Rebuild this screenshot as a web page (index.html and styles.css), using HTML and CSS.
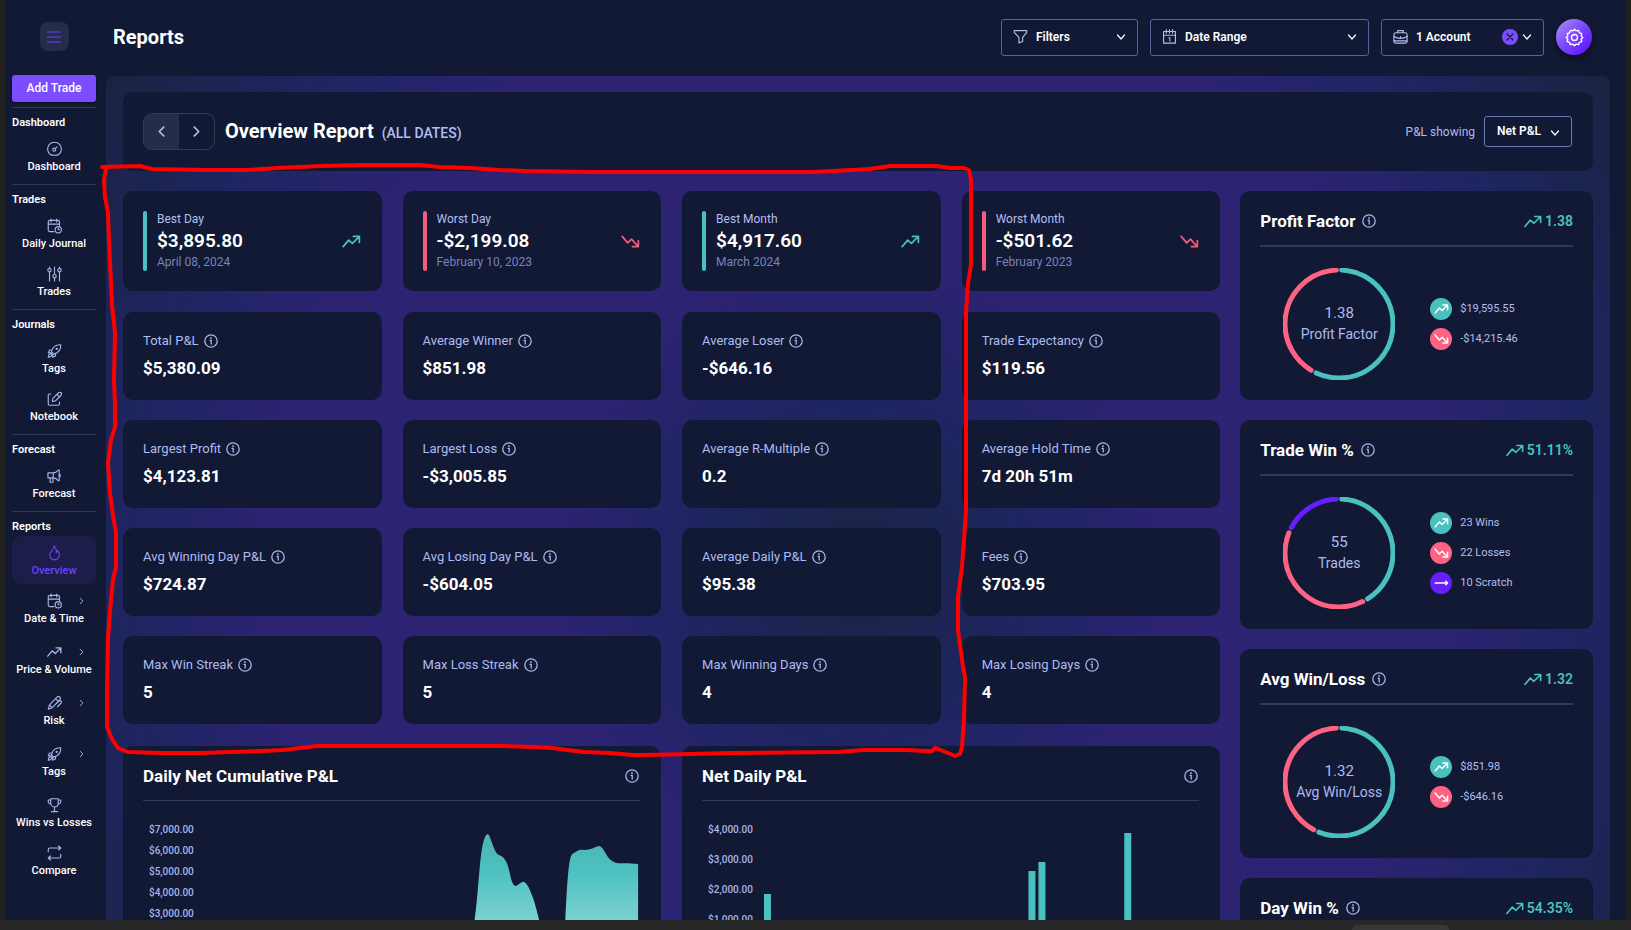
FILE: index.html
```html
<!DOCTYPE html>
<html lang="en">
<head>
<meta charset="utf-8">
<title>Reports - Overview</title>
<link rel="stylesheet" href="styles.css">
</head>
<body>
<svg class="defs" aria-hidden="true">
  <symbol id="up" viewBox="0 0 20 14"><path d="M1 12.5 7 5.5l4 3.5 7.5-7.5M12 1.5h6.5V8"/></symbol>
  <symbol id="down" viewBox="0 0 20 14"><path d="M1 1.5 7 8.5l4-4 7.5 8M12 12.5h6.5V6"/></symbol>
  <symbol id="flat" viewBox="0 0 20 14"><path d="M1 7h17.500M16 4.500 18.500 7 16 9.500"/></symbol>
  <symbol id="info" viewBox="0 0 14 14"><circle cx="7" cy="7" r="6.2"/><path d="M6 6.3h1.2v3.8"/><path d="M7 3.6v1.1"/></symbol>
  <symbol id="chev-down" viewBox="0 0 10 10"><path d="M1.5 3 5 7l3.5-4"/></symbol>
  <symbol id="chev-right" viewBox="0 0 10 10"><path d="M3 1l4 4-4 4"/></symbol>
  <symbol id="chev-left" viewBox="0 0 10 10"><path d="M7 1 3 5l4 4"/></symbol>
  <symbol id="gauge" viewBox="0 0 24 24"><path d="M5.500 21a11 11 0 1 1 13 0c-3 1.300-10 1.300-13 0z"/><circle cx="11.500" cy="13" r="2.400"/><path d="M13.300 11.300 16 8.500"/></symbol>
  <symbol id="calendar-clock" viewBox="0 0 24 24"><path d="M11 21H4.500A2.500 2.500 0 0 1 2 18.500v-13A2.500 2.500 0 0 1 4.500 3h13A2.500 2.500 0 0 1 20 5.500V11M2 9h18M6.500 1v4.500M15.500 1v4.500"/><circle cx="18" cy="18" r="5"/><path d="M18 15.500V18h2"/></symbol>
  <symbol id="sliders" viewBox="0 0 24 24"><path d="M4 1v2M4 9v14M12 1v11M12 19v4M20 1v2M20 9v14"/><circle cx="4" cy="6" r="2.700"/><circle cx="12" cy="15.500" r="2.700"/><circle cx="20" cy="6" r="2.700"/></symbol>
  <symbol id="rocket" viewBox="0 0 24 24"><path d="M7 13C9 6 14 1.500 22 2c.5 8-4 13-11 15zM8 10l-4 .5L2 15l4.500-.5M14 16l-.5 4L9 22l.5-4.500M2 22l1-4 3.500-2 1.500 1.500-2 3.500z"/><circle cx="15.500" cy="8.500" r="1"/></symbol>
  <symbol id="note" viewBox="0 0 24 24"><path d="M6 4H4a2 2 0 0 0-2 2v14a2 2 0 0 0 2 2h14a2 2 0 0 0 2-2v-3M8.500 16l1-5 9-9a2.600 2.600 0 0 1 4 4l-9 9zM16 4.500l4 4"/></symbol>
  <symbol id="horn" viewBox="0 0 24 24"><path d="M1.500 7H10c4 0 6-2 8-4.500h1.500v17h-1.500C16 17 14 15 10 15H1.500zM5 15v7h4.500v-7M10 7v8M19.500 8.500a3 3 0 0 1 0 5.500"/></symbol>
  <symbol id="flame" viewBox="0 0 24 24"><path d="M11 1c1 4-2 6-5 9.500C2 16 6 23 12 23s10-6 7-12c-.6-1-1.500-2-2-3-.5 2-1 3-2.500 3.500C15.500 7 14 3 11 1z"/></symbol>
  <symbol id="pens" viewBox="0 0 24 24"><path d="M2 22l2-7L16 2.500a3 3 0 0 1 4.500 4L8.500 19.500zM4 15l4.500 4.500M13.500 5l4.500 4.500M15 13l4-4a2 2 0 0 1 3.500 3L17 18"/></symbol>
  <symbol id="trophy" viewBox="0 0 24 24"><path d="M6 2h12v7c0 4-3 6-6 6s-6-2-6-6zM12 15v7M7 22.500h10M6 4H2c-.5 4 1 6.500 4.500 6.500M18 4h4c.5 4-1 6.500-4.500 6.500"/></symbol>
  <symbol id="loop" viewBox="0 0 24 24"><path d="M2 10V6.500A2.500 2.500 0 0 1 4.500 4H22M18.500.8 22 4l-3.500 3.200M22 14v3.500a2.500 2.500 0 0 1-2.500 2.500H2M5.500 16.800 2 20l3.500 3.200"/></symbol>
  <symbol id="funnel" viewBox="0 0 24 24"><path d="M2 2.500h20v3l-6.500 8V20l-6 2.500v-9L2 5.500z"/></symbol>
  <symbol id="calendar" viewBox="0 0 24 24"><path d="M2.500 4h19v18.500h-19zM2.500 10h19M7 1v5.500M12 1v5.500M17 1v5.500M11 14h1.500v5"/></symbol>
  <symbol id="briefcase" viewBox="0 0 24 24"><rect x="1.500" y="6" width="21" height="16.500" rx="3"/><path d="M7.500 6V2.500h9V6M1.500 12c6 4 15 4 21 0M1.500 19h21M12 12v3"/></symbol>
  <symbol id="gear" viewBox="0 0 24 24"><path d="M12 1.500l2.200 2.200 3-.7 1 3 3 1-.8 3L22.500 12l-2.100 2.200.8 3-3 .9-1 3-3-.8L12 22.500l-2.200-2.200-3 .8-1-3-3-.9.800-3L1.500 12l2.100-2-.8-3 3-1 1-3 3 .7z"/><circle cx="12" cy="12" r="3.800"/></symbol>
</svg>

<div class="window">
  <nav class="sidebar" aria-label="Main">
    <button class="burger" aria-label="Toggle menu"><svg viewBox="0 0 14 12"><path d="M.5 1h13M.5 6h13M.5 11h13"/></svg></button>
    <button class="add">Add Trade</button>
    <section class="group"><h2>Dashboard</h2>
      <a class="item" href="#"><svg><use href="#gauge"/></svg>Dashboard</a>
    </section>
    <section class="group"><h2>Trades</h2>
      <a class="item" href="#"><svg><use href="#calendar-clock"/></svg>Daily Journal</a>
      <a class="item" href="#"><svg><use href="#sliders"/></svg>Trades</a>
    </section>
    <section class="group"><h2>Journals</h2>
      <a class="item" href="#"><svg><use href="#rocket"/></svg>Tags</a>
      <a class="item" href="#"><svg><use href="#note"/></svg>Notebook</a>
    </section>
    <section class="group"><h2>Forecast</h2>
      <a class="item" href="#"><svg><use href="#horn"/></svg>Forecast</a>
    </section>
    <section class="group"><h2>Reports</h2>
      <a class="item active" href="#"><svg><use href="#flame"/></svg>Overview</a>
      <a class="item sub" href="#"><svg><use href="#calendar-clock"/></svg>Date &amp; Time<svg class="more"><use href="#chev-right"/></svg></a>
      <a class="item sub" href="#"><svg><use href="#up"/></svg>Price &amp; Volume<svg class="more"><use href="#chev-right"/></svg></a>
      <a class="item sub" href="#"><svg><use href="#pens"/></svg>Risk<svg class="more"><use href="#chev-right"/></svg></a>
      <a class="item sub" href="#"><svg><use href="#rocket"/></svg>Tags<svg class="more"><use href="#chev-right"/></svg></a>
      <a class="item" href="#"><svg><use href="#trophy"/></svg>Wins vs Losses</a>
      <a class="item" href="#"><svg><use href="#loop"/></svg>Compare</a>
    </section>
  </nav>

  <div class="page">
    <header class="topbar">
      <h1>Reports</h1>
      <button class="picker filters"><svg class="lead"><use href="#funnel"/></svg>Filters<svg class="chev"><use href="#chev-down"/></svg></button>
      <button class="picker dates"><svg class="lead"><use href="#calendar"/></svg>Date Range<svg class="chev"><use href="#chev-down"/></svg></button>
      <div class="picker account"><svg class="lead"><use href="#briefcase"/></svg><button class="plain">1 Account</button><button class="clear" aria-label="Clear account"><svg viewBox="0 0 8 8"><path d="M1 1l6 6M7 1 1 7"/></svg></button><svg class="chev"><use href="#chev-down"/></svg></div>
      <button class="settings" aria-label="Settings"><svg><use href="#gear"/></svg></button>
    </header>

    <main class="panel">
      <div class="titlebar">
        <div class="pager"><button class="prev" aria-label="Previous report"><svg><use href="#chev-left"/></svg></button><button class="next" aria-label="Next report"><svg><use href="#chev-right"/></svg></button></div>
        <h2>Overview Report <small>(ALL DATES)</small></h2>
        <label for="pnl">P&amp;L showing</label>
        <div class="selectbox"><select id="pnl"><option>Net P&amp;L</option><option>Gross P&amp;L</option></select><svg class="chev"><use href="#chev-down"/></svg></div>
      </div>

      <div class="columns">
        <div class="left">
          <div class="highlights">
            <article class="card best"><div class="rule"><p>Best Day</p><strong>$3,895.80</strong><small>April 08, 2024</small></div><svg class="trend good"><use href="#up"/></svg></article>
            <article class="card best"><div class="rule loss"><p>Worst Day</p><strong>-$2,199.08</strong><small>February 10, 2023</small></div><svg class="trend bad"><use href="#down"/></svg></article>
            <article class="card best"><div class="rule"><p>Best Month</p><strong>$4,917.60</strong><small>March 2024</small></div><svg class="trend good"><use href="#up"/></svg></article>
            <article class="card best"><div class="rule loss"><p>Worst Month</p><strong>-$501.62</strong><small>February 2023</small></div><svg class="trend bad"><use href="#down"/></svg></article>
          </div>
          <div class="stats">
            <article class="card stat"><p>Total P&amp;L<svg class="info"><use href="#info"/></svg></p><strong>$5,380.09</strong></article>
            <article class="card stat"><p>Average Winner<svg class="info"><use href="#info"/></svg></p><strong>$851.98</strong></article>
            <article class="card stat"><p>Average Loser<svg class="info"><use href="#info"/></svg></p><strong>-$646.16</strong></article>
            <article class="card stat"><p>Trade Expectancy<svg class="info"><use href="#info"/></svg></p><strong>$119.56</strong></article>
            <article class="card stat"><p>Largest Profit<svg class="info"><use href="#info"/></svg></p><strong>$4,123.81</strong></article>
            <article class="card stat"><p>Largest Loss<svg class="info"><use href="#info"/></svg></p><strong>-$3,005.85</strong></article>
            <article class="card stat"><p>Average R-Multiple<svg class="info"><use href="#info"/></svg></p><strong>0.2</strong></article>
            <article class="card stat"><p>Average Hold Time<svg class="info"><use href="#info"/></svg></p><strong>7d 20h 51m</strong></article>
            <article class="card stat"><p>Avg Winning Day P&amp;L<svg class="info"><use href="#info"/></svg></p><strong>$724.87</strong></article>
            <article class="card stat"><p>Avg Losing Day P&amp;L<svg class="info"><use href="#info"/></svg></p><strong>-$604.05</strong></article>
            <article class="card stat"><p>Average Daily P&amp;L<svg class="info"><use href="#info"/></svg></p><strong>$95.38</strong></article>
            <article class="card stat"><p>Fees<svg class="info"><use href="#info"/></svg></p><strong>$703.95</strong></article>
            <article class="card stat"><p>Max Win Streak<svg class="info"><use href="#info"/></svg></p><strong>5</strong></article>
            <article class="card stat"><p>Max Loss Streak<svg class="info"><use href="#info"/></svg></p><strong>5</strong></article>
            <article class="card stat"><p>Max Winning Days<svg class="info"><use href="#info"/></svg></p><strong>4</strong></article>
            <article class="card stat"><p>Max Losing Days<svg class="info"><use href="#info"/></svg></p><strong>4</strong></article>
          </div>
          <div class="charts">
            <article class="card chart">
              <div class="head"><h3>Daily Net Cumulative P&amp;L</h3><svg class="info end"><use href="#info"/></svg></div>
              <div class="plot">
                <ul class="axis fine"><li>$7,000.00</li><li>$6,000.00</li><li>$5,000.00</li><li>$4,000.00</li><li>$3,000.00</li></ul>
                <svg viewBox="0 0 442 130" preserveAspectRatio="none" role="img" aria-label="Daily net cumulative P&amp;L">
                  <defs><linearGradient id="fill" x1="0" y1="0" x2="0" y2="1"><stop offset="0" stop-color="#4fb3b3"/><stop offset=".3" stop-color="#4bc0c0"/><stop offset="1" stop-color="#97dada"/></linearGradient></defs>
                  <path class="area" d="M273 130 L276 101 C281 70 281 18 289 14 C292 14 294 28 299 34 C302 36 305 36 308 42 C312 50 312 64 317 66 C320 66 323 61 326 62 C331 65 337 82 341 101 L344 130 Z M366 130 L367 101 C369 65 370 38 374 34 C380 30 382 29 386 30 C393 30 396 27 401 26 C406 27 408 38 414 41 C420 45 424 42 440 44 L440 130 Z"/>
                </svg>
              </div>
            </article>
            <article class="card chart">
              <div class="head"><h3>Net Daily P&amp;L</h3><svg class="info end"><use href="#info"/></svg></div>
              <div class="plot">
                <ul class="axis"><li>$4,000.00</li><li>$3,000.00</li><li>$2,000.00</li><li>$1,000.00</li></ul>
                <svg viewBox="0 0 442 130" preserveAspectRatio="none" role="img" aria-label="Net daily P&amp;L">
                  <path class="bars" d="M6 74h7v56H6zM271 51h7v79h-7zM281 42h7v88h-7zM367 13h7v117h-7z"/>
                </svg>
              </div>
            </article>
          </div>
        </div>

        <aside class="right">
          <article class="card ratio">
            <div class="head"><h3>Profit Factor</h3><svg class="info"><use href="#info"/></svg><span class="score"><svg><use href="#up"/></svg>1.38</span></div>
            <div class="body">
              <div class="donut"><svg viewBox="0 0 112 112"><circle class="teal" pathLength="360" stroke-dasharray="202 360" stroke-dashoffset="-3" cx="56" cy="56" r="54"/><circle class="pink" pathLength="360" stroke-dasharray="146 360" stroke-dashoffset="-211" cx="56" cy="56" r="54"/></svg><p><b>1.38</b>Profit Factor</p></div>
              <ul class="legend"><li><i class="win"><svg><use href="#up"/></svg></i>$19,595.55</li><li><i class="lose"><svg><use href="#down"/></svg></i>-$14,215.46</li></ul>
            </div>
          </article>
          <article class="card ratio">
            <div class="head"><h3>Trade Win %</h3><svg class="info"><use href="#info"/></svg><span class="score"><svg><use href="#up"/></svg>51.11%</span></div>
            <div class="body">
              <div class="donut"><svg viewBox="0 0 112 112"><circle class="teal" pathLength="360" stroke-dasharray="145 360" stroke-dashoffset="-3" cx="56" cy="56" r="54"/><circle class="pink" pathLength="360" stroke-dasharray="138 360" stroke-dashoffset="-154" cx="56" cy="56" r="54"/><circle class="violet" pathLength="360" stroke-dasharray="59 360" stroke-dashoffset="-298" cx="56" cy="56" r="54"/></svg><p><b>55</b>Trades</p></div>
              <ul class="legend"><li><i class="win"><svg><use href="#up"/></svg></i>23 Wins</li><li><i class="lose"><svg><use href="#down"/></svg></i>22 Losses</li><li><i class="even"><svg><use href="#flat"/></svg></i>10 Scratch</li></ul>
            </div>
          </article>
          <article class="card ratio">
            <div class="head"><h3>Avg Win/Loss</h3><svg class="info"><use href="#info"/></svg><span class="score"><svg><use href="#up"/></svg>1.32</span></div>
            <div class="body">
              <div class="donut"><svg viewBox="0 0 112 112"><circle class="teal" pathLength="360" stroke-dasharray="199 360" stroke-dashoffset="-3" cx="56" cy="56" r="54"/><circle class="pink" pathLength="360" stroke-dasharray="149 360" stroke-dashoffset="-208" cx="56" cy="56" r="54"/></svg><p><b>1.32</b>Avg Win/Loss</p></div>
              <ul class="legend"><li><i class="win"><svg><use href="#up"/></svg></i>$851.98</li><li><i class="lose"><svg><use href="#down"/></svg></i>-$646.16</li></ul>
            </div>
          </article>
          <article class="card ratio">
            <div class="head"><h3>Day Win %</h3><svg class="info"><use href="#info"/></svg><span class="score"><svg><use href="#up"/></svg>54.35%</span></div>
          </article>
        </aside>
      </div>
    </main>
  </div>

  <svg class="marker" viewBox="0 0 1631 920" aria-hidden="true"><path d="M102 167 L140 166 L152 169 L207 170 L247 170 L278 168 L320 166 L363 165 L420 165 L439 167 L470 168 L500 170 L526 171 L590 172 L813 172 L852 170 L870 169 L890 166 L937 166 L950 168 L964 168 L969 170 L971 180 L971 265 L968 283 L966 313 L966 510 L964 540 L962 567 L958 597 L958 630 L963 667 L965 677 L964 720 L962 747 L960 754 L955 756 L948 753 L938 749 L935 748 L932 751 L925 751 L906 750 L864 750 L838 752 L730 753 L692 754 L643 755 L633 755 L610 753 L584 752 L567 750 L553 748 L535 747 L500 746 L317 746 L300 748 L283 750 L262 751 L200 753 L160 753 L128 752 L118 748 L112 739 L107 727 L107 688 L108 637 L111 600 L113 580 L116 567 L116 533 L113 515 L110 493 L108 463 L111 440 L115 427 L115 405 L114 380 L115 333 L112 305 L109 240 L108 213 L105 197 L104 180 L106 169"/></svg>
</div>
<footer class="scrollstrip"><div class="thumb"></div></footer>
</body>
</html>
```

FILE: styles.css
```css
* { box-sizing: border-box; }

body {
  margin: 0;
  height: 100vh;
  display: flex;
  flex-direction: column;
  overflow: hidden;
  background: #272727;
  color: #fff;
  font: 400 14px/18px Roboto, "Liberation Sans", sans-serif;
}

h1, h2, h3, p, ul { margin: 0; padding: 0; }
ul { list-style: none; }
button, select { font: inherit; color: inherit; border: 0; padding: 0; margin: 0; background: none; cursor: pointer; }
a { color: inherit; text-decoration: none; }

svg { fill: none; stroke: currentColor; stroke-linecap: round; stroke-linejoin: round; flex: none; }
.defs { display: none; }

.window {
  position: relative;
  flex: 1;
  min-height: 0;
  display: flex;
  overflow: hidden;
  background: #111934;
  border-left: 5px solid #20201f;
  border-right: 6px solid #20201f;
}

.scrollstrip { height: 10px; display: flex; justify-content: flex-end; padding: 5px 182px 0 0; }
.thumb { width: 97px; border-radius: 6px 6px 0 0; background: #373737; }

/* Sidebar */
.sidebar { flex: none; width: 101px; padding: 22px 10px 0 7px; }
.burger {
  display: flex; align-items: center; justify-content: center;
  width: 29px; height: 29px; margin: 0 auto 24px; border-radius: 8px;
  background: #262d4a; color: #6a3ff0;
}
.burger svg { width: 14px; height: 12px; stroke-width: 1; }
.add {
  display: block; width: 100%; height: 27px; margin-bottom: 5px; padding-bottom: 2px; border-radius: 3px;
  background: #7c4dff; font-size: 12px; font-weight: 500;
  box-shadow: 0 1px 2px rgba(0, 0, 0, .5);
}
.group { border-top: 1px solid #2f394f; padding-bottom: 4px; }
.group h2 { padding-top: 5px; font-size: 11px; line-height: 19px; font-weight: 600; }
.item {
  position: relative;
  display: flex; flex-direction: column; align-items: center; gap: 3px;
  height: 48px; padding-top: 9px; border-radius: 9px;
  font-size: 11px; line-height: 14px; font-weight: 500; white-space: nowrap;
}
.item svg { width: 15px; height: 16px; color: #aab5e6; stroke-width: 1.800; }
.item.sub { height: 51px; }
.item .more { position: absolute; right: 11px; top: 13px; width: 7px; height: 8px; stroke-width: 1.300; }
.item.active { background: #1c1d48; color: #6f42ff; }
.item.active svg { color: #6f42ff; }

/* Header */
.page { flex: 1; min-width: 0; padding-right: 15px; }
.topbar { display: flex; align-items: center; gap: 12px; height: 76px; padding: 0 18px 2px 7px; }
.topbar h1 { flex: 1; font-size: 20px; line-height: 24px; font-weight: 700; }
.picker {
  display: flex; align-items: center; gap: 8px;
  height: 37px; padding: 0 11px 1px 11px;
  border: 1px solid #56649b; border-radius: 3px;
  font-size: 12px; font-weight: 600;
}
.filters { width: 137px; }
.dates { width: 219px; }
.account { width: 163px; }
.lead { width: 15px; height: 15px; color: #b3bdec; stroke-width: 1.800; }
.chev { width: 10px; height: 10px; stroke-width: 1.200; }
.picker .chev { margin-left: auto; }
.account .chev { margin-left: -4px; }
.clear {
  display: flex; align-items: center; justify-content: center;
  width: 16px; height: 16px; margin-left: auto; border-radius: 50%;
  background: #7c4dff; color: #111934;
}
.clear svg { width: 8px; height: 8px; stroke-width: 1.200; }
.settings {
  display: flex; align-items: center; justify-content: center;
  width: 36px; height: 36px; border-radius: 50%;
  background: linear-gradient(135deg, #ab8cef 5%, #7c4dff 45%, #651fff 80%);
  box-shadow: 0 3px 6px rgba(0, 0, 0, .5);
}
.settings svg { width: 19px; height: 19px; stroke-width: 1.700; }

/* Report panel */
.panel {
  min-height: 988px; padding: 16px 17px; border-radius: 8px;
  background: radial-gradient(circle 898px at 50% 494px,
    #1b2341 0, #1e2560 18%, #2c2372 34%, #2c2372 66%, #1e2560 82%, #1b2341 100%);
}
.card, .titlebar { background: #111934; border-radius: 10px; }

.titlebar { display: flex; align-items: center; height: 79px; padding: 0 21px 0 20px; margin-bottom: 20px; }
.titlebar h2 { flex: 1; margin-left: 10px; font-size: 20px; line-height: 24px; font-weight: 700; }
.titlebar h2 small { margin-left: 3px; font-size: 14px; font-weight: 500; color: #b3bff0; }
.titlebar label { margin-right: 9px; font-size: 12px; color: #aebbf0; }
.pager { display: flex; width: 72px; height: 37px; border: 1px solid #343d50; border-radius: 9px; overflow: hidden; color: #b3bff0; }
.pager button { flex: 1; display: flex; align-items: center; justify-content: center; }
.pager svg { width: 11px; height: 11px; stroke-width: 1.500; }
.prev { background: #262d4a; }
.selectbox { position: relative; width: 88px; height: 31px; border: 1px solid #6a78b4; border-radius: 3px; }
.selectbox select { appearance: none; width: 100%; height: 100%; padding: 0 0 2px 12px; font-size: 12px; font-weight: 600; outline: 0; }
.selectbox .chev { position: absolute; right: 11px; top: 11px; pointer-events: none; }

.columns { display: flex; align-items: flex-start; gap: 20px; }
.left { flex: 1; min-width: 0; }
.right { flex: none; width: 24%; display: grid; gap: 20px; }
.highlights, .stats { display: grid; grid-template-columns: repeat(4, minmax(0, 1fr)); gap: 20px 21px; }
.highlights { margin-bottom: 21px; }

.best { display: flex; align-items: center; justify-content: space-between; padding: 20px 21px 20px 20px; }
.rule { position: relative; padding-left: 14px; }
.rule::before { content: ""; position: absolute; left: 0; top: 0; bottom: 0; width: 4px; border-radius: 2px; background: #4bc0c0; }
.rule.loss::before { background: #f55c7c; }
.rule p { font-size: 12px; line-height: 16px; color: #b3bff0; }
.rule strong { display: block; font-size: 19px; line-height: 27px; font-weight: 600; }
.rule small { display: block; font-size: 12px; line-height: 17px; color: #7783bd; }
.trend { width: 19px; height: 13px; stroke-width: 1.800; }
.good { color: #4bc0c0; }
.bad { color: #f55c7c; }

.stat { height: 88px; padding: 20px; }
.stat p { display: flex; align-items: center; gap: 5px; margin-bottom: 8px; font-size: 13px; line-height: 18px; color: #aebbf0; }
.stat strong { display: block; font-size: 17px; line-height: 20px; font-weight: 700; }
.info { width: 14px; height: 14px; color: #aab5e6; stroke-width: 1.300; }

.head { display: flex; align-items: center; gap: 7px; padding-bottom: 14px; border-bottom: 2px solid #343b50; }
.head h3 { font-size: 17px; line-height: 20px; font-weight: 700; }

.charts { display: grid; grid-template-columns: repeat(2, minmax(0, 1fr)); gap: 21px; margin-top: 22px; }
.chart { padding: 20px 21px 20px 20px; height: 320px; }
.chart .head { border-width: 1px; }
.end { margin-left: auto; margin-right: 1px; }
.plot { display: flex; gap: 4px; padding-top: 19px; }
.plot > svg { flex: 1; min-width: 0; height: 130px; }
.axis { padding-left: 6px; width: 52px; font-size: 10px; font-weight: 500; color: #aab5e6; }
.axis li { height: 30px; line-height: 20px; }
.axis.fine li { height: 21px; }
.area { fill: url(#fill); stroke: none; }
.bars { fill: #4bc0c0; stroke: none; }

.ratio { height: 209px; padding: 20px; }
.score { display: flex; align-items: center; gap: 3px; margin-left: auto; color: #4bc0c0; font-weight: 600; }
.score svg { width: 18px; height: 13px; stroke-width: 1.800; }
.body { display: flex; align-items: center; padding: 21px 0 0 23px; }
.donut { position: relative; width: 112px; height: 112px; flex: none; }
.donut svg { display: block; transform: rotate(-90deg); stroke-width: 5; }
.donut p { position: absolute; inset: 0; display: flex; flex-direction: column; align-items: center; justify-content: center; font-size: 14px; line-height: 21px; color: #aebbf0; }
.donut b { font-size: 15px; font-weight: 400; }
.teal { stroke: #4bc0c0; }
.pink { stroke: #ff6384; }
.violet { stroke: #651fff; }
.legend { display: grid; gap: 8px; margin-left: 35px; font-size: 11px; color: #b3bff0; }
.legend li { display: flex; align-items: center; gap: 8px; }
.legend i { display: flex; align-items: center; justify-content: center; width: 22px; height: 22px; border-radius: 50%; color: #fff; }
.legend svg { width: 15px; height: 10px; stroke-width: 2; }
.win { background: #4bc0c0; }
.lose { background: #ff6384; }
.even { background: #651fff; }

/* Freehand highlight over the page */
.marker { position: absolute; left: -5px; top: 0; width: 1631px; height: 920px; color: #f00; stroke-width: 4; pointer-events: none; }
```
